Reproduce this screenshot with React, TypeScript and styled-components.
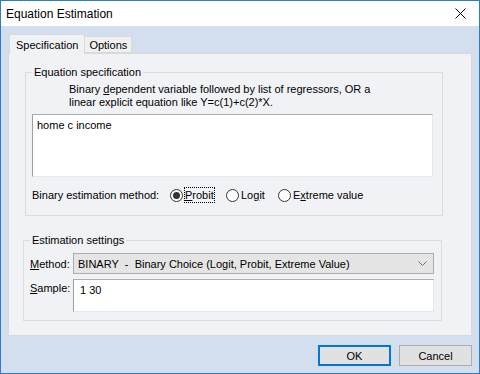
import React, { useState } from 'react';
import styled, { createGlobalStyle } from 'styled-components';

const GlobalStyle = createGlobalStyle`
    html, body {
        margin: 0;
        padding: 0;
        background: #ffffff;
    }
    * {
        box-sizing: border-box;
    }
`;

const App = () => {
    const [method, setMethod] = useState('probit');

    return (
        <>
            <GlobalStyle />
            <Window>
                <TitleBar>
                    <Title>Equation Estimation</Title>
                    <CloseButton>
                        <svg width="11" height="11" viewBox="0 0 11 11">
                            <path d="M0.5 0.5 L10.5 10.5 M10.5 0.5 L0.5 10.5" stroke="#000" strokeWidth="1" />
                        </svg>
                    </CloseButton>
                </TitleBar>
                <Body>
                    <TabStrip>
                        <Tab active>Specification</Tab>
                        <Tab>Options</Tab>
                    </TabStrip>
                    <TabPanel>
                        <SpecGroup>
                            <Legend>Equation specification</Legend>
                            <Hint>
                                Binary <u>d</u>ependent variable followed by list of regressors, OR a
                                <br />
                                linear explicit equation like Y=c(1)+c(2)*X.
                            </Hint>
                            <EquationBox>home c income</EquationBox>
                            <RadioRow>
                                <RadioLabel>Binary estimation method:</RadioLabel>
                                <Radio width={56} onClick={() => setMethod('probit')}>
                                    <RadioDot checked={method === 'probit'} />
                                    <FocusText focused={method === 'probit'}>
                                        <u>P</u>robit
                                    </FocusText>
                                </Radio>
                                <Radio width={52} onClick={() => setMethod('logit')}>
                                    <RadioDot checked={method === 'logit'} />
                                    <FocusText focused={method === 'logit'}>
                                        Lo<u>g</u>it
                                    </FocusText>
                                </Radio>
                                <Radio width={100} onClick={() => setMethod('extreme')}>
                                    <RadioDot checked={method === 'extreme'} />
                                    <FocusText focused={method === 'extreme'}>
                                        E<u>x</u>treme value
                                    </FocusText>
                                </Radio>
                            </RadioRow>
                        </SpecGroup>
                        <SettingsGroup>
                            <Legend>Estimation settings</Legend>
                            <FieldGrid>
                                <FieldLabel>
                                    <u>M</u>ethod:
                                </FieldLabel>
                                <ComboBox>
                                    <span>BINARY&nbsp; - &nbsp;Binary Choice (Logit, Probit, Extreme Value)</span>
                                    <svg width="9" height="5" viewBox="0 0 9 5">
                                        <path d="M0.5 0.5 L4.5 4.5 L8.5 0.5" stroke="#707070" fill="none" strokeWidth="1" />
                                    </svg>
                                </ComboBox>
                                <FieldLabel top>
                                    <u>S</u>ample:
                                </FieldLabel>
                                <SampleBox>1 30</SampleBox>
                            </FieldGrid>
                        </SettingsGroup>
                    </TabPanel>
                    <Footer>
                        <Button primary>OK</Button>
                        <Button>Cancel</Button>
                    </Footer>
                </Body>
            </Window>
        </>
    );
};

export default App;

// Styled Components
const Window = styled.div`
    width: 480px;
    height: 374px;
    border: 1px solid #2b7bd0;
    display: flex;
    flex-direction: column;
    font-family: 'Liberation Sans', Arial, sans-serif;
    font-size: 11px;
    color: #000;
    background: #d3dfee;
`;

const TitleBar = styled.div`
    height: 25px;
    background: #ffffff;
    display: flex;
    align-items: center;
    justify-content: space-between;
    padding: 0 8px 0 5px;
`;

const Title = styled.div`
    font-size: 12px;
`;

const CloseButton = styled.div`
    width: 20px;
    height: 20px;
    display: flex;
    align-items: center;
    justify-content: center;
    margin-right: 1px;
`;

const Body = styled.div`
    flex: 1;
    display: flex;
    flex-direction: column;
    padding: 8px 7px 0 7px;
`;

const TabStrip = styled.div`
    display: flex;
    align-items: flex-end;
    height: 19px;
    padding-left: 1px;
    position: relative;
    z-index: 1;
`;

const Tab = styled.div<{ active?: boolean }>`
    height: ${({ active }) => (active ? '20px' : '17px')};
    padding: 0 ${({ active }) => (active ? '6px' : '4px')};
    display: flex;
    align-items: center;
    background: ${({ active }) => (active ? '#f1f2f5' : '#f0f0f0')};
    border: 1px solid #d9d9d9;
    border-bottom: ${({ active }) => (active ? 'none' : '1px solid #d9d9d9')};
    margin-bottom: ${({ active }) => (active ? '-1px' : '0')};
    margin-left: ${({ active }) => (active ? '0' : '-1px')};
`;

const TabPanel = styled.div`
    height: 283px;
    background: #f1f2f5;
    border: 1px solid #d9d9d9;
    padding: 11px 28px 0 16px;
`;

const GroupBase = styled.fieldset`
    margin: 0;
    border: 1px solid #dcdcdc;
    padding: 0;
    min-width: 0;
`;

const SpecGroup = styled(GroupBase)`
    height: 151px;
    padding: 0 9px 0 6px;
`;

const SettingsGroup = styled(GroupBase)`
    margin-top: 17px;
    margin-left: -2px;
    margin-right: 1px;
    height: 88px;
    padding: 0 7px 0 6px;
`;

const Legend = styled.legend`
    margin-left: 0;
    padding: 0 2px;
    line-height: 14px;
`;

const Hint = styled.div`
    padding-left: 37px;
    line-height: 13px;
    margin-top: 4px;
`;

const EquationBox = styled.div`
    margin-top: 5px;
    height: 63px;
    background: #ffffff;
    border: 1px solid #abadb3;
    border-left-color: #a0a0a0;
    border-right-color: #e3e9ef;
    border-bottom-color: #e3e9ef;
    padding: 4px 4px;
`;

const RadioRow = styled.div`
    display: flex;
    align-items: center;
    margin-top: 10px;
    height: 16px;
`;

const RadioLabel = styled.span`
    width: 138px;
`;

const Radio = styled.span<{ width: number }>`
    display: flex;
    align-items: center;
    width: ${({ width }) => width}px;
    cursor: pointer;
`;

const RadioDot = styled.span<{ checked?: boolean }>`
    width: 13px;
    height: 13px;
    border-radius: 50%;
    border: 1px solid #333333;
    background: #ffffff;
    margin-right: 2px;
    display: flex;
    align-items: center;
    justify-content: center;

    &::after {
        content: '';
        width: 7px;
        height: 7px;
        border-radius: 50%;
        background: ${({ checked }) => (checked ? '#333333' : 'transparent')};
    }
`;

const FocusText = styled.span<{ focused?: boolean }>`
    outline: ${({ focused }) => (focused ? '1px dotted #000' : 'none')};
    outline-offset: 0;
    line-height: 14px;
`;

const FieldGrid = styled.div`
    display: grid;
    grid-template-columns: 43px 1fr;
    row-gap: 5px;
    margin-top: 6px;
    align-items: center;
`;

const FieldLabel = styled.div<{ top?: boolean }>`
    align-self: ${({ top }) => (top ? 'start' : 'center')};
    padding-top: ${({ top }) => (top ? '3px' : '0')};
`;

const ComboBox = styled.div`
    height: 21px;
    background: #e5e5e5;
    border: 1px solid #acacac;
    display: flex;
    align-items: center;
    justify-content: space-between;
    padding: 0 6px 0 4px;
    white-space: nowrap;
`;

const SampleBox = styled.div`
    height: 33px;
    background: #ffffff;
    border: 1px solid #abadb3;
    border-left-color: #a0a0a0;
    border-right-color: #e3e9ef;
    border-bottom-color: #e3e9ef;
    padding: 4px 6px;
`;

const Footer = styled.div`
    display: flex;
    justify-content: flex-end;
    gap: 8px;
    margin-top: 9px;
`;

const Button = styled.button<{ primary?: boolean }>`
    width: 73px;
    height: 21px;
    font-family: inherit;
    font-size: 11px;
    color: #000;
    background: #e1e1e1;
    border: ${({ primary }) => (primary ? '2px solid #0078d7' : '1px solid #adadad')};
    padding: 0;
`;
